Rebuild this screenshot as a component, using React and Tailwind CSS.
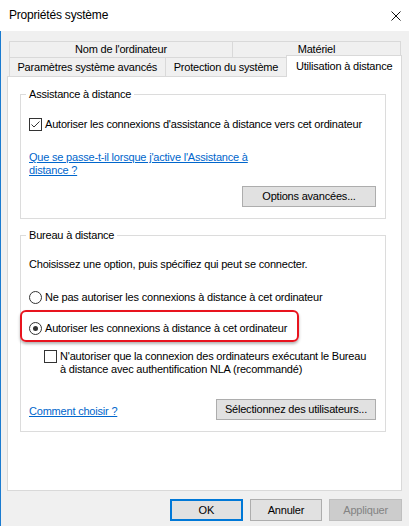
import React from 'react'

function Check({ checked }) {
  return (
    <span className="w-[13px] h-[13px] shrink-0 border border-[#333333] bg-white flex items-center justify-center">
      {checked && (
        <svg width="11" height="11" viewBox="0 0 11 11" fill="none">
          <path d="M1.5 5.5 L4 8 L9.5 2.5" stroke="#333333" strokeWidth="1" />
        </svg>
      )}
    </span>
  )
}

function Radio({ checked }) {
  return (
    <span className="w-[13px] h-[13px] shrink-0 rounded-full border border-[#333333] bg-white flex items-center justify-center">
      {checked && <span className="w-[5px] h-[5px] rounded-full bg-[#333333]" />}
    </span>
  )
}

function Button({ children, className = '' }) {
  return (
    <div className={`h-[21px] bg-[#e1e1e1] border border-[#adadad] flex items-center justify-center ${className}`}>
      {children}
    </div>
  )
}

export default function App() {
  return (
    <div className="w-[409px] h-[526px] flex flex-col bg-[#f0f0f0] text-black text-[11px] leading-[13px] font-['Liberation_Sans',Arial,sans-serif] tracking-[-0.2px]">
      {/* Title bar */}
      <div className="h-[31px] shrink-0 bg-white flex items-center justify-between pl-[9px] pr-[8px]">
        <span className="text-[12px] tracking-[-0.2px]">Propriétés système</span>
        <svg width="10" height="10" viewBox="0 0 10 10" fill="none">
          <path d="M0.5 0.5 L9.5 9.5 M9.5 0.5 L0.5 9.5" stroke="#111111" strokeWidth="1" />
        </svg>
      </div>

      {/* Body */}
      <div className="flex-1 flex flex-col border-l border-[#1a7bd0] pl-[6px] pr-[7px] pt-[10px]">
        {/* Tab row 1 */}
        <div className="flex ml-[2px]">
          <div className="w-[224px] h-[17px] border border-[#d9d9d9] flex items-center justify-center">Nom de l'ordinateur</div>
          <div className="w-[169px] h-[17px] -ml-px border border-[#d9d9d9] flex items-center justify-center">Matériel</div>
        </div>
        {/* Tab row 2 */}
        <div className="flex items-end ml-[2px] -mt-[3px]">
          <div className="w-[157px] h-[20px] border border-[#d9d9d9] bg-[#f0f0f0] flex items-center justify-center pt-px">Paramètres système avancés</div>
          <div className="w-[123px] h-[20px] -ml-px border border-[#d9d9d9] bg-[#f0f0f0] flex items-center justify-center pt-px">Protection du système</div>
          <div className="relative z-10 w-[116px] h-[22px] -ml-px border border-b-0 border-[#d9d9d9] bg-white flex items-center justify-center">Utilisation à distance</div>
        </div>

        {/* Panel */}
        <div className="-mt-px h-[415px] bg-white border border-[#d9d9d9] flex flex-col pl-[12px]">
          {/* Assistance à distance */}
          <fieldset className="mt-[11px] w-[366px] border border-[#dcdcdc] pl-[8px] pr-[9px] pb-[11px] flex flex-col">
            <legend className="-ml-[3px] px-[3px]">Assistance à distance</legend>
            <div className="mt-[17px] flex items-center gap-[3px]">
              <Check checked />
              <span>Autoriser les connexions d'assistance à distance vers cet ordinateur</span>
            </div>
            <a className="mt-[20px] text-[#0066cc] underline">
              Que se passe-t-il lorsque j'active l'Assistance à<br />distance ?
            </a>
            <Button className="mt-[9px] w-[134px] self-end">Options avancées...</Button>
          </fieldset>

          {/* Bureau à distance */}
          <fieldset className="mt-[10px] w-[366px] border border-[#dcdcdc] pl-[8px] pr-[9px] pb-[11px] flex flex-col">
            <legend className="-ml-[3px] px-[3px]">Bureau à distance</legend>
            <p className="mt-[16px]">Choisissez une option, puis spécifiez qui peut se connecter.</p>
            <div className="mt-[20px] flex items-center gap-[3px]">
              <Radio />
              <span>Ne pas autoriser les connexions à distance à cet ordinateur</span>
            </div>
            <div className="mt-[6px] -ml-[9px] w-[279px] border-2 border-[#e8141e] rounded-[6px] shadow-[0_2px_3px_rgba(0,0,0,0.3)] pl-[7px] pt-[10px] pb-[5px]">
              <div className="h-[13px] flex items-center gap-[3px]">
                <Radio checked />
                <span>Autoriser les connexions à distance à cet ordinateur</span>
              </div>
            </div>
            <div className="mt-[8px] ml-[15px] flex items-start gap-[3px]">
              <Check />
              <span>
                N'autoriser que la connexion des ordinateurs exécutant le Bureau<br />à distance avec authentification NLA (recommandé)
              </span>
            </div>
            <div className="mt-[23px] flex items-center justify-between">
              <a className="pt-[3px] text-[#0066cc] underline">Comment choisir ?</a>
              <Button className="w-[160px]">Sélectionnez des utilisateurs...</Button>
            </div>
          </fieldset>
        </div>

        {/* Dialog buttons */}
        <div className="mt-[8px] ml-[163px] flex gap-[7px]">
          <div className="w-[73px] h-[22px] bg-[#e1e1e1] border-2 border-[#0078d7] flex items-center justify-center">OK</div>
          <div className="w-[73px] h-[22px] bg-[#e1e1e1] border border-[#adadad] flex items-center justify-center">Annuler</div>
          <div className="w-[73px] h-[22px] bg-[#cccccc] border border-[#bfbfbf] text-[#838383] flex items-center justify-center">Appliquer</div>
        </div>
      </div>
    </div>
  )
}
